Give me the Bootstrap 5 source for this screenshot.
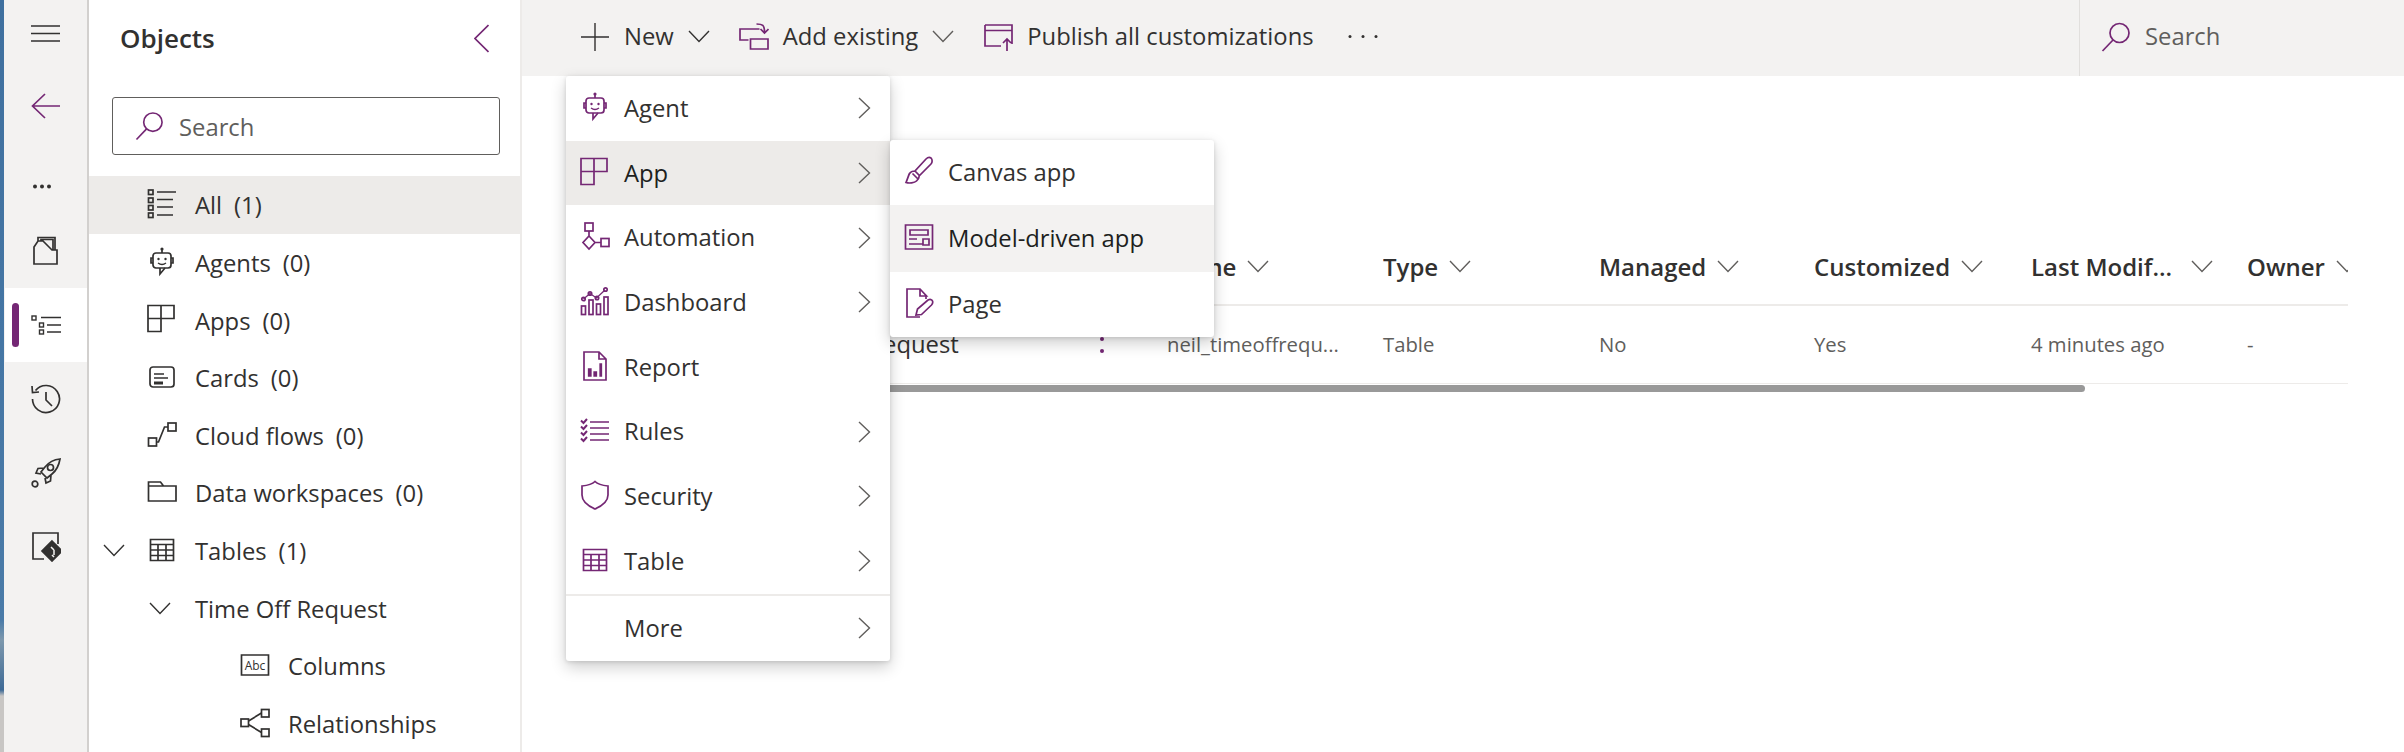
<!DOCTYPE html>
<html lang="en">
<head>
    <meta charset="UTF-8">
    <title>Objects</title>
    <link href="https://cdn.jsdelivr.net/npm/bootstrap@5.3.0/dist/css/bootstrap.min.css" rel="stylesheet">
    <style>
        html, body { height: 752px; overflow: hidden; }
        body { font-family: "Open Sans", "Noto Sans", sans-serif; font-size: 23.8px; color: #323130; background: #fff; }
        svg { display: block; flex: none; fill: none; stroke-width: 1.7; }
        .ic-purple { stroke: #742774; color: #742774; }
        .ic-dark { stroke: #323130; color: #323130; }
        .ic-grey { stroke: #605e5c; color: #605e5c; }
        .ic-thin { stroke-width: 1.4; }
        .dots-dark { fill: #323130; }
        .dots-purple { fill: #742774; }

        .shell { height: 752px; }
        .sliver { width: 4px; flex: none; background: linear-gradient(#3f709f 0, #4a7ba8 620px, #7d98ad 640px, #3e6a96 690px, #c8c6c4 696px, #c8c6c4 100%); }
        .rail { width: 85px; flex: none; background: #f3f2f1; border-right: 2px solid #d2d0ce; padding-top: 21px; }
        .rail-btn { height: 74px; display: flex; align-items: center; justify-content: center; }
        .rail-burger { height: 24px; }
        .rail-back { height: 122px; }
        .rail-more { height: 24px; margin-top: 7px; justify-content: flex-start; padding-left: 28px; }
        .rail-objects { height: 90px; padding-top: 14px; }
        .rail-on { background: #fff; position: relative; margin-left: 1px; }
        .rail-on::before { content: ""; position: absolute; left: 7px; top: 15px; width: 7px; height: 44px; border-radius: 4px; background: #742774; }

        .objects { width: 433px; flex: none; border-right: 2px solid #edebe9; overflow: hidden; }
        .objects-head { height: 76px; padding: 0 31px 0 31px; }
        .objects-title { font-size: 26px; font-weight: 600; }
        .objects-search { height: 58px; margin: 21px 20px 21px 23px; border: 1px solid #605e5c; border-radius: 3px; padding-left: 22px; color: #605e5c; gap: 15px; }
        .objects-search span { padding-top: 3px; }
        .tree-row { height: 57.6px; display: flex; align-items: center; white-space: nowrap; position: relative; padding-top: 2px; }
        .tree-row.on { background: #edebe9; height: 58px; }
        .tree-icon { width: 30px; margin-left: 58px; margin-right: 18px; margin-bottom: 4px; }
        .tree-row .count { margin-left: 12px; }
        .tree-caret { position: absolute; left: 14px; top: 22px; }
        .tree-sub .tree-caret { left: 60px; }
        .tree-deep .tree-icon { margin-left: 151px; }
        .tree-lvl2 { padding-left: 106px; }

        .workspace { flex: 1 1 auto; position: relative; min-width: 0; }
        .cmdbar { height: 76px; background: #f3f2f1; padding-left: 58px; }
        .cmd { display: flex; align-items: center; white-space: nowrap; margin-bottom: 3px; }
        .cmd-ic { margin-right: 14px; }
        .cmd-chev { margin-left: 14px; }
        .cmd-next { margin-left: 29px; }
        .cmd-dots { margin-left: 34px; }
        .cmd-search { margin-left: auto; margin-bottom: 0; width: 325px; height: 76px; border-left: 1px solid #e1dfdd; padding: 0 0 3px 21px; gap: 14px; color: #605e5c; }

        .grid-head, .grid-row { display: grid; grid-template-columns: 601px 216px 216px 215px 217px 216px 101px; margin-left: 44px; margin-right: 56px; }
        .grid-head { margin-top: 153px; height: 77px; align-items: center; border-bottom: 2px solid #edebe9; font-weight: 600; font-size: 24px; }
        .grid-row { height: 78px; align-items: center; border-bottom: 1px solid #edebe9; font-size: 20.3px; color: #605e5c; white-space: nowrap; }
        .grid-head > div { display: flex; align-items: center; gap: 11px; white-space: nowrap; overflow: hidden; }
        .grid-head > div:first-child { padding-left: 56px; }
        .row-name { color: #323130; font-size: 23.8px; display: flex; align-items: center; padding-left: 201px; }
        .row-more { margin-left: 140px; }
        .hscroll { height: 7px; background: #999; margin-left: 59px; width: 1504px; border-radius: 0 4px 4px 0; margin-top: 1px; }

        .flyout { position: absolute; background: #fff; width: 324px; border-radius: 3px; box-shadow: 0 6px 16px rgba(0,0,0,.2), 0 1px 4px rgba(0,0,0,.12); z-index: 5; }
        .fly-main { left: 44px; top: 76px; height: 585px; }
        .fly-sub { left: 368px; top: 140px; height: 197px; z-index: 6; }
        .fly-item { height: 64.7px; display: flex; align-items: center; padding: 0 19px 0 14px; white-space: nowrap; }
        .fly-item > svg:first-child { margin-bottom: 2px; }
        .fly-item .label { margin-left: 14px; flex: 1 1 auto; padding-top: 1px; }
        .fly-item.on-main { background: #edebe9; color: #201f1e; }
        .fly-item.on-sub { background: #f3f2f1; color: #201f1e; height: 67px; }
        .fly-sep { height: 2px; background: #edebe9; }
        .no-icon { width: 30px; flex: none; }
        .abc-text { font-family: "Open Sans", sans-serif; font-size: 12px; fill: #323130; stroke: none; }
    </style>
</head>
<body>
    <svg width="0" height="0" class="position-absolute">
        <defs>
            <symbol id="i-plus" viewBox="0 0 30 30"><path d="M15 1v28M1 15h28"/></symbol>
            <symbol id="i-search" viewBox="0 0 30 30"><circle cx="18.5" cy="11" r="9.5"/><path d="M12 18L1.500 29"/></symbol>
            <symbol id="i-down" viewBox="0 0 22 13"><path d="M1 1l10 10.500L21 1"/></symbol>
            <symbol id="i-right" viewBox="0 0 13 22"><path d="M1 1l10.500 10L1 21"/></symbol>
            <symbol id="i-agent" viewBox="0 0 30 30"><circle cx="15" cy="2" r="1.600" fill="currentColor" stroke="none"/><path d="M15 3v3"/><rect x="6" y="6" width="18" height="15" rx="3"/><path d="M6 11H4v5h2M24 11h2v5h-2M13 21v6l5-6"/><circle cx="11.500" cy="12" r="1.200" fill="currentColor" stroke="none"/><circle cx="18.500" cy="12" r="1.200" fill="currentColor" stroke="none"/><path d="M11 16q4 3 8 0" stroke-width="1.300"/></symbol>
            <symbol id="i-app" viewBox="0 0 30 30"><path d="M1 1.500h26v13H14v13H1zM14 1.500v13M1 14.500h13"/></symbol>
            <symbol id="i-flow" viewBox="0 0 30 30"><rect x="5" y="1" width="8" height="8"/><path d="M9 9v5M9 14l6 6.500-6 6.500-6-6.500zM15 20.500h6"/><rect x="21" y="16.500" width="8" height="8"/></symbol>
            <symbol id="i-dash" viewBox="0 0 30 30"><rect x="1.500" y="20" width="4" height="8.500"/><rect x="9" y="14" width="4" height="14.500"/><rect x="16.500" y="18" width="4" height="10.500"/><rect x="24" y="11" width="4" height="17.500"/><path d="M3.500 13l6.500-5.500 6.500 4.500L25 4" stroke-width="1.300"/><circle cx="3.500" cy="13" r="1.700"/><circle cx="10" cy="7.500" r="1.700"/><circle cx="17" cy="12" r="1.700"/><circle cx="25.500" cy="3.500" r="1.700"/></symbol>
            <symbol id="i-report" viewBox="0 0 30 30"><path d="M4 1h15l7 7v21H4zM19 1v7h7"/><path d="M8.500 25v-7h2.500v7zM14 25v-4h2.500v4zM20 25V13h1.500v12z" fill="currentColor" stroke-width="1.300"/></symbol>
            <symbol id="i-rules" viewBox="0 0 30 30"><path d="M10 6h19M10 12h19M10 18h19M10 24h19"/><path d="M1 4.500L3.500 7 7 3M1 10.500L3.500 13 7 9M1 16.500L3.500 19 7 15M1 22.500L3.500 25 7 21" stroke-width="2"/></symbol>
            <symbol id="i-shield" viewBox="0 0 30 30"><path d="M15 1.500c3 3 7.500 4 13 4.500v9c0 6.500-5 10.500-13 14C7 25.500 2 21.500 2 15V6c5.500-.5 10-1.500 13-4.500z"/></symbol>
            <symbol id="i-table" viewBox="0 0 30 30"><path d="M3.500 4.500h23v21h-23zM3.500 9.500h23M3.500 15h23M3.500 20.500h23M11 9.500v16M19 9.500v16"/></symbol>
            <symbol id="i-brush" viewBox="0 0 30 30"><path d="M27 2c-2-1.500-3.500-.5-5 1L11 15l4.500 4.500L27 8c1.500-1.500 1.500-4.500 0-6zM11 15c-2 0-4 0-5.500 2.500-1 2-2 5.500-3.500 9 3 1 8.500.5 10.500-1.500 2-2 3-4 2.500-5.500M8.500 17.500l5 5"/></symbol>
            <symbol id="i-model" viewBox="0 0 30 30"><path d="M1.500 3h27v24h-27z"/><path d="M6 8h18v5H6zM5 17h8M5 22h14M19 17h6v6h-6z"/></symbol>
            <symbol id="i-page" viewBox="0 0 30 30"><path d="M16 29H3V1h13l6.500 7h-6.500V1M22 8v3"/><path d="M12 27l1.500-6L24 12c2-1 4-.5 4.500 1 .5 1.500.5 2.500-1 4l-10 9.500z"/></symbol>
            <symbol id="i-addex" viewBox="0 0 30 30"><path d="M9.500 18H1V7h19.500M11.500 17h17.500v10H11.500zM17.500 2c6 0 8 1 8 8M21.500 7l4 4 4-4"/></symbol>
            <symbol id="i-publish" viewBox="0 0 30 30"><path d="M2 3h27v19M2 8.500h27M2 3v21h16M24 29V17M20 21l4-4 4 4"/></symbol>
            <symbol id="i-all" viewBox="0 0 30 30"><rect x="1.500" y="1" width="4.500" height="4.500"/><rect x="1.500" y="9" width="4.500" height="4.500"/><rect x="1.500" y="16.500" width="4.500" height="4.500"/><rect x="1.500" y="24" width="4.500" height="4.500"/><path d="M10 3h19M10 10.500h16M10 18h16M10 26h16"/></symbol>
            <symbol id="i-card" viewBox="0 0 30 30"><rect x="3" y="5" width="24" height="20" rx="3"/><path d="M7 12h10M7 16h14"/><path d="M7 21h9" stroke-width="3"/></symbol>
            <symbol id="i-cloud" viewBox="0 0 30 30"><rect x="1.500" y="18" width="8" height="8"/><rect x="21" y="3" width="8" height="8"/><path d="M9.500 22h2l6-15H21"/></symbol>
            <symbol id="i-folder" viewBox="0 0 30 30"><path d="M1.500 5h12l3 4h12.500v15H1.500zM1.500 9h15"/></symbol>
            <symbol id="i-rel" viewBox="0 0 30 30"><rect x="1" y="11" width="7.500" height="7.500"/><rect x="21.500" y="1.500" width="7.500" height="7.500"/><rect x="21.500" y="21" width="7.500" height="7.500"/><path d="M8.500 13l13-8M8.500 16.500l13 8"/></symbol>
            <symbol id="i-objfile" viewBox="0 0 25 29"><path d="M1 28V11l4-6h5l9 9h5v14zM5 5V1.500h17v12.500M8 5V3.500h12v10"/></symbol>
            <symbol id="i-history" viewBox="0 0 30 30"><path d="M4.500 6.500A13.500 13.500 0 1 1 1.500 15M1 2l.5 6.500L8 8M15 8v8l6 6"/></symbol>
            <symbol id="i-rocket" viewBox="0 0 30 30"><path d="M29 1c-6 .5-11 3-15 8l-4 5 6 6 5-4c5-4 7-9 8-15zM13 10l-6 .5-2 4.500 5 1M20 17l-.5 6-4.500 2-1-5"/><circle cx="19.500" cy="9.500" r="3"/><circle cx="4" cy="26" r="2.800"/></symbol>
            <symbol id="i-deploy" viewBox="0 0 30 30"><path d="M27 12V1H2v26h11"/><path d="M21 9l10 10-10 10-10-10z" fill="currentColor"/><path d="M20 15l3 3M23 18v5M21 23l2 2" stroke="#f3f2f1" stroke-width="1.500"/></symbol>
        </defs>
    </svg>

    <div class="shell d-flex">
        <div class="sliver"></div>

        <!-- left rail -->
        <div class="rail d-flex flex-column">
            <div class="rail-btn rail-burger"><svg width="29" height="17" viewBox="0 0 29 17" class="ic-dark ic-thin"><path d="M0 1h29M0 8.500h29M0 16h29"/></svg></div>
            <div class="rail-btn rail-back"><svg width="29" height="26" viewBox="0 0 29 26" class="ic-purple"><path d="M29 13H1.500M14 1L1.500 13 14 25"/></svg></div>
            <div class="rail-btn rail-more"><svg width="20" height="5" viewBox="0 0 20 5" class="dots-dark"><circle cx="3" cy="2.500" r="2"/><circle cx="10" cy="2.500" r="2"/><circle cx="17" cy="2.500" r="2"/></svg></div>
            <div class="rail-btn rail-objects"><svg width="25" height="29" class="ic-dark"><use href="#i-objfile"/></svg></div>
            <div class="rail-btn rail-on"><svg width="30" height="20" viewBox="0 0 30 20" class="ic-dark ic-thin"><rect x="1" y="1" width="4" height="4"/><rect x="8.500" y="8" width="4" height="4"/><rect x="8.500" y="15" width="4" height="4"/><path d="M10 2.500h20M16 10h14M16 17h14"/></svg></div>
            <div class="rail-btn"><svg width="30" height="30" class="ic-dark"><use href="#i-history"/></svg></div>
            <div class="rail-btn"><svg width="30" height="30" class="ic-dark"><use href="#i-rocket"/></svg></div>
            <div class="rail-btn"><svg width="30" height="30" class="ic-dark"><use href="#i-deploy"/></svg></div>
        </div>

        <!-- objects panel -->
        <div class="objects">
            <div class="objects-head d-flex align-items-center justify-content-between">
                <div class="objects-title">Objects</div>
                <svg width="15" height="29" viewBox="0 0 15 29" class="ic-purple"><path d="M14.500 1L1 14.500 14.500 28"/></svg>
            </div>
            <div class="objects-search d-flex align-items-center">
                <svg width="29" height="30" class="ic-purple"><use href="#i-search"/></svg>
                <span>Search</span>
            </div>
            <div class="tree-row on"><svg width="30" height="30" class="tree-icon ic-dark"><use href="#i-all"/></svg>All<span class="count">(1)</span></div>
            <div class="tree-row"><svg width="30" height="30" class="tree-icon ic-dark"><use href="#i-agent"/></svg>Agents<span class="count">(0)</span></div>
            <div class="tree-row"><svg width="30" height="30" class="tree-icon ic-dark"><use href="#i-app"/></svg>Apps<span class="count">(0)</span></div>
            <div class="tree-row"><svg width="30" height="30" class="tree-icon ic-dark"><use href="#i-card"/></svg>Cards<span class="count">(0)</span></div>
            <div class="tree-row"><svg width="30" height="30" class="tree-icon ic-dark"><use href="#i-cloud"/></svg>Cloud flows<span class="count">(0)</span></div>
            <div class="tree-row"><svg width="30" height="30" class="tree-icon ic-dark"><use href="#i-folder"/></svg>Data workspaces<span class="count">(0)</span></div>
            <div class="tree-row"><svg width="22" height="13" class="tree-caret ic-dark ic-thin"><use href="#i-down"/></svg><svg width="30" height="30" class="tree-icon ic-dark"><use href="#i-table"/></svg>Tables<span class="count">(1)</span></div>
            <div class="tree-row tree-sub tree-lvl2"><svg width="22" height="13" class="tree-caret ic-dark ic-thin"><use href="#i-down"/></svg>Time Off Request</div>
            <div class="tree-row tree-deep"><svg width="30" height="30" viewBox="0 0 30 30" class="tree-icon ic-dark"><path d="M1.500 5h27v20h-27z"/><text x="15" y="19.500" text-anchor="middle" class="abc-text">Abc</text></svg>Columns</div>
            <div class="tree-row tree-deep"><svg width="30" height="30" class="tree-icon ic-dark"><use href="#i-rel"/></svg>Relationships</div>
        </div>

        <!-- right side -->
        <div class="workspace">
            <div class="cmdbar d-flex align-items-center">
                <div class="cmd"><svg width="30" height="30" class="ic-dark ic-thin cmd-ic"><use href="#i-plus"/></svg>New<svg width="22" height="13" class="ic-dark ic-thin cmd-chev"><use href="#i-down"/></svg></div>
                <div class="cmd cmd-next"><svg width="30" height="30" class="ic-purple cmd-ic"><use href="#i-addex"/></svg>Add existing<svg width="22" height="13" class="ic-grey ic-thin cmd-chev"><use href="#i-down"/></svg></div>
                <div class="cmd cmd-next"><svg width="30" height="30" class="ic-purple cmd-ic"><use href="#i-publish"/></svg>Publish all customizations</div>
                <div class="cmd cmd-dots"><svg width="30" height="5" viewBox="0 0 30 5" class="dots-dark"><circle cx="2" cy="2.500" r="1.500"/><circle cx="15" cy="2.500" r="1.500"/><circle cx="28" cy="2.500" r="1.500"/></svg></div>
                <div class="cmd cmd-search"><svg width="30" height="30" class="ic-purple"><use href="#i-search"/></svg>Search</div>
            </div>

            <div class="grid-head">
                <div>Display name</div>
                <div>Name<svg width="22" height="13" class="ic-grey ic-thin"><use href="#i-down"/></svg></div>
                <div>Type<svg width="22" height="13" class="ic-grey ic-thin"><use href="#i-down"/></svg></div>
                <div>Managed<svg width="22" height="13" class="ic-grey ic-thin"><use href="#i-down"/></svg></div>
                <div>Customized<svg width="22" height="13" class="ic-grey ic-thin"><use href="#i-down"/></svg></div>
                <div>Last Modif...<svg width="22" height="13" class="ic-grey ic-thin ms-2"><use href="#i-down"/></svg></div>
                <div>Owner<svg width="22" height="13" class="ic-grey ic-thin"><use href="#i-down"/></svg></div>
            </div>
            <div class="grid-row">
                <div class="row-name">Time Off Request<svg width="6" height="22" viewBox="0 0 6 22" class="row-more dots-purple"><circle cx="3" cy="5" r="2"/><circle cx="3" cy="17" r="2"/></svg></div>
                <div>neil_timeoffrequ...</div>
                <div>Table</div>
                <div>No</div>
                <div>Yes</div>
                <div>4 minutes ago</div>
                <div>-</div>
            </div>
            <div class="hscroll"></div>

            <!-- New menu -->
            <div class="flyout fly-main">
                <div class="fly-item"><svg width="30" height="30" class="ic-purple"><use href="#i-agent"/></svg><span class="label">Agent</span><svg width="13" height="22" class="ic-grey ic-thin"><use href="#i-right"/></svg></div>
                <div class="fly-item on-main"><svg width="30" height="30" class="ic-purple"><use href="#i-app"/></svg><span class="label">App</span><svg width="13" height="22" class="ic-grey ic-thin"><use href="#i-right"/></svg></div>
                <div class="fly-item"><svg width="30" height="30" class="ic-purple"><use href="#i-flow"/></svg><span class="label">Automation</span><svg width="13" height="22" class="ic-grey ic-thin"><use href="#i-right"/></svg></div>
                <div class="fly-item"><svg width="30" height="30" class="ic-purple"><use href="#i-dash"/></svg><span class="label">Dashboard</span><svg width="13" height="22" class="ic-grey ic-thin"><use href="#i-right"/></svg></div>
                <div class="fly-item"><svg width="30" height="30" class="ic-purple"><use href="#i-report"/></svg><span class="label">Report</span></div>
                <div class="fly-item"><svg width="30" height="30" class="ic-purple"><use href="#i-rules"/></svg><span class="label">Rules</span><svg width="13" height="22" class="ic-grey ic-thin"><use href="#i-right"/></svg></div>
                <div class="fly-item"><svg width="30" height="30" class="ic-purple"><use href="#i-shield"/></svg><span class="label">Security</span><svg width="13" height="22" class="ic-grey ic-thin"><use href="#i-right"/></svg></div>
                <div class="fly-item"><svg width="30" height="30" class="ic-purple"><use href="#i-table"/></svg><span class="label">Table</span><svg width="13" height="22" class="ic-grey ic-thin"><use href="#i-right"/></svg></div>
                <div class="fly-sep"></div>
                <div class="fly-item"><span class="no-icon"></span><span class="label">More</span><svg width="13" height="22" class="ic-grey ic-thin"><use href="#i-right"/></svg></div>
            </div>
            <div class="flyout fly-sub">
                <div class="fly-item"><svg width="30" height="30" class="ic-purple"><use href="#i-brush"/></svg><span class="label">Canvas app</span></div>
                <div class="fly-item on-sub"><svg width="30" height="30" class="ic-purple"><use href="#i-model"/></svg><span class="label">Model-driven app</span></div>
                <div class="fly-item"><svg width="30" height="30" class="ic-purple"><use href="#i-page"/></svg><span class="label">Page</span></div>
            </div>
        </div>
    </div>
</body>
</html>
